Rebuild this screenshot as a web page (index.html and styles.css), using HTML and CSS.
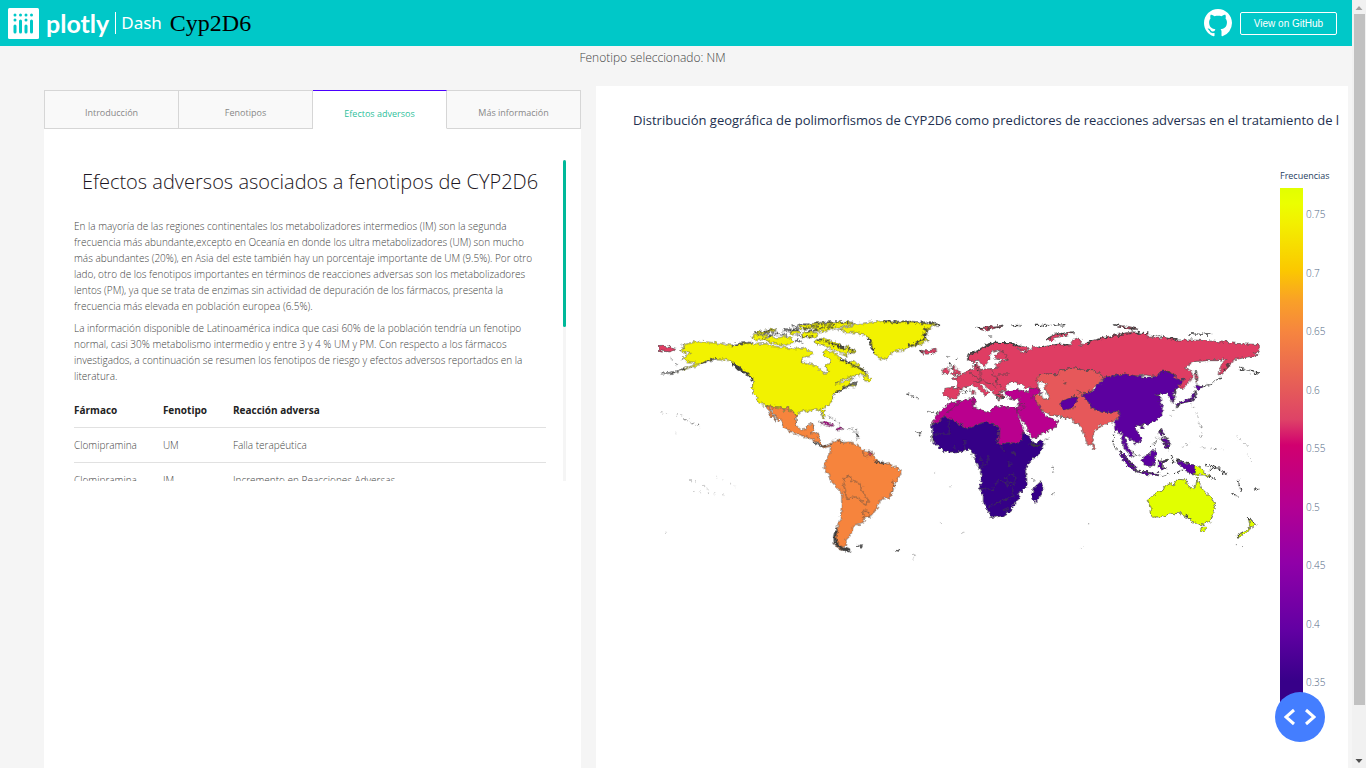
FILE: index.html
```html
<!DOCTYPE html>
<html lang="es">
<head>
<meta charset="utf-8">
<title>Cyp2D6</title>
<link rel="stylesheet" href="styles.css">
</head>
<body>
<div class="page">
  <header class="topbar">
    <a class="brand" href="#">
      <svg class="brand-mark" viewBox="0 0 31 31" aria-hidden="true">
        <rect width="31" height="31" rx="1.500" fill="#fff"/>
        <g stroke="#00c8c8" stroke-width="3" stroke-linecap="round">
          <path d="M7 18v6M12.500 13v11M18 18v6M23.500 13v11"/>
          <path d="M7 7h0M12.500 7h0M18 7h0M23.500 7h0M7 12h0M18 12h0" />
        </g>
      </svg>
      <span class="brand-name">plotly</span>
      <span class="brand-dash">Dash</span>
    </a>
    <h1 class="app-title">Cyp2D6</h1>
    <a class="gh-icon" href="#" aria-label="GitHub">
      <svg viewBox="0 0 16 16" width="28" height="28"><path fill="#fff" d="M8 0C3.580 0 0 3.580 0 8c0 3.540 2.290 6.530 5.470 7.590.4.070.55-.17.55-.38 0-.19-.01-.82-.01-1.490-2.010.37-2.530-.49-2.690-.94-.09-.23-.48-.94-.82-1.130-.28-.15-.68-.52-.01-.53.63-.01 1.080.58 1.230.82.72 1.210 1.870.87 2.330.66.07-.52.28-.87.51-1.070-1.780-.2-3.640-.89-3.640-3.950 0-.87.31-1.590.82-2.150-.08-.2-.36-1.020.08-2.120 0 0 .67-.21 2.200.82.64-.18 1.320-.27 2-.27s1.360.09 2 .27c1.530-1.040 2.200-.82 2.200-.82.44 1.100.16 1.920.08 2.120.51.56.82 1.270.82 2.150 0 3.070-1.870 3.750-3.650 3.950.29.25.54.73.54 1.480 0 1.070-.01 1.930-.01 2.200 0 .21.15.46.55.38A8.010 8.010 0 0 0 16 8c0-4.420-3.580-8-8-8z"/></svg>
    </a>
    <a class="gh-button" href="#">View on GitHub</a>
  </header>

  <p class="selected">Fenotipo seleccionado: NM</p>

  <main class="columns">
    <section class="info">
      <nav class="tabs" role="tablist">
        <button class="tab" role="tab">Introducción</button>
        <button class="tab" role="tab">Fenotipos</button>
        <button class="tab active" role="tab" aria-selected="true">Efectos adversos</button>
        <button class="tab" role="tab">Más información</button>
      </nav>
      <div class="scroller">
        <article class="article">
          <h2>Efectos adversos asociados a fenotipos de CYP2D6</h2>
          <p>En la mayoría de las regiones continentales los metabolizadores intermedios (IM) son la segunda frecuencia más abundante,excepto en Oceanía en donde los ultra metabolizadores (UM) son mucho más abundantes (20%), en Asia del este también hay un porcentaje importante de UM (9.5%). Por otro lado, otro de los fenotipos importantes en términos de reacciones adversas son los metabolizadores lentos (PM), ya que se trata de enzimas sin actividad de depuración de los fármacos, presenta la frecuencia más elevada en población europea (6.5%).</p>
          <p>La información disponible de Latinoamérica indica que casi 60% de la población tendría un fenotipo normal, casi 30% metabolismo intermedio y entre 3 y 4 % UM y PM. Con respecto a los fármacos investigados, a continuación se resumen los fenotipos de riesgo y efectos adversos reportados en la literatura.</p>
          <table>
            <thead><tr><th>Fármaco</th><th>Fenotipo</th><th>Reacción adversa</th></tr></thead>
            <tbody>
              <tr><td>Clomipramina</td><td>UM</td><td>Falla terapéutica</td></tr>
              <tr><td>Clomipramina</td><td>IM</td><td>Incremento en Reacciones Adversas</td></tr>
            </tbody>
          </table>
        </article>
        <div class="track"><div class="thumb"></div></div>
      </div>
    </section>

    <section class="chart">
      <h3>Distribución geográfica de polimorfismos de CYP2D6 como predictores de reacciones adversas en el tratamiento de l</h3>
      <div class="plot">
        <svg class="map" viewBox="24 24 1806 730" role="img" aria-label="Mapa mundial de frecuencias">
          <defs>
            <filter id="coast" x="-2%" y="-2%" width="104%" height="104%">
              <feTurbulence type="fractalNoise" baseFrequency="0.090" numOctaves="3" seed="4"/>
              <feDisplacementMap in="SourceGraphic" scale="16" xChannelSelector="R" yChannelSelector="G"/>
            </filter>
          </defs>
          <g filter="url(#coast)" class="land">
            <!-- Norteamérica y Groenlandia -->
            <g class="c-yellow">
              <path d="M118 100L140 94 180 97 220 102 245 106 275 100 300 97 310 103 350 101 365 108 390 112 440 115 462 113 478 122 490 131 480 140 460 140 453 155 475 160 500 168 515 180 522 190 535 186 530 175 527 165 538 160 540 150 535 142 525 140 518 128 530 122 545 125 560 134 575 148 595 158 612 152 625 165 640 178 650 186 645 195 630 192 610 198 585 206 555 222 585 214 612 203 600 215 603 226 618 222 625 215 612 230 595 225 580 232 570 240 555 248 550 262 545 275 535 283 520 295 523 310 526 322 518 320 512 300 495 298 480 302 465 302 450 305 442 315 438 320 425 303 410 292 400 299 390 292 365 290 348 288 325 275 312 250 306 235 310 212 300 200 285 190 270 175 255 160 240 153 220 148 190 146 170 152 160 160 130 170 100 180 60 190 100 177 125 168 140 158 110 155 105 148 92 148 105 140 125 128 100 125 88 122 105 112 95 106Z"/>
              <path d="M565 58L595 50 620 42 670 36 710 32 760 36 800 38 870 43 845 50 835 65 820 75 835 92 805 105 775 112 760 120 745 122 725 128 720 135 712 150 690 145 675 135 668 115 660 100 658 85 645 75 620 68 590 68Z"/>
              <path d="M640 208l8-14 14 12-4 8-14-2zM495 92l25-8 30 10 30 14 35 10-5 12-20-5 5 14-25-11-30-13-20-11-20 1z"/>
              <path d="M302 80l14-6 38 2-10 10-22 6zM338 88l22-9 20 6 22-6 24 6 8 12-30 9-28-4zM446 48l60-10 80-3 30 4-30 9-40 8-20 10-40-4 14-7-44 3z"/>
              <path d="M454 70l30-5 24 6-14 12-36-2zM420 66l20-6 10 8-20 6zM340 62l34-6 8 5-30 7zM315 68l20-5 20 7-30 3z"/>
            </g>
            <g class="dark-line">
              <path d="M248 158l22 22 18 8 20 22" stroke-width="7"/>
              <path d="M155 162l18-10 28-6" stroke-width="4"/>
              <path d="M312 66h30l20-6 14 4M338 72l46-4M355 80l30-8 26 4M400 58h34l12-6M398 64l50-4M425 50l38-8M440 76l30 6 22-6M455 44l60-4 30-4 60 2M460 56l40-8 60-4M470 66l40-10 40-6M438 90l20 8M500 86l30 8 40 20 40 4-10 14" stroke-width="4" stroke-dasharray="14 3 5 4 9 2"/>
              <path d="M820 56l14 4-14 14 12 10-18 6-16 12-24 4M760 35l70 4 40 5M700 34l60 3M655 84l10 20 8 28M570 148l30 10M545 102l40 10" stroke-width="6" stroke-dasharray="15 2 6 3"/>
              <path d="M32 191l30-3 40-10M245 106l30-6 30-2M595 160l35 14 22 16M625 215l-30 12-22 12-18 10" stroke-width="4"/>
              <path d="M100 327l20 6M124 340l18 2 8 12M62 146l8 6M75 162l8 6M535 316l25 18 10 10M595 357l25 2 5 30M770 252l34 10M838 305l30 5M800 365l14 4-8 10M352 296l28 34" stroke-width="3" stroke-dasharray="7 5 2 6"/>
            </g>
            <!-- México y Centroamérica -->
            <path class="c-orange" d="M348 288L390 292 400 300 410 293 425 303 438 320 440 348 455 360 470 358 472 345 492 342 490 358 484 366 500 370 508 385 515 402 528 408 542 400 542 408 522 414 508 402 495 392 480 385 450 375 420 365 400 350 392 335 375 320 362 294 358 296 378 332 372 330 358 310Z"/>
            <path class="c-magenta" d="M505 338l20-3 26 11-5 3-22-7zM560 352h14l8 5-20 2z"/>
            <!-- Sudamérica -->
            <g transform="translate(480 360)">
              <path class="c-orange" d="M62 42L75 32 90 28 100 38 120 36 138 42 150 52 165 62 185 65 195 85 205 95 225 98 245 105 268 118 273 130 265 145 252 160 248 185 240 202 215 208 205 222 200 235 185 258 165 265 160 280 135 285 128 295 125 308 118 320 108 330 110 345 100 350 115 362 100 362 85 355 72 340 75 320 80 300 84 285 92 260 95 220 95 185 80 172 65 155 52 130 42 115 45 100 52 85 60 70Z"/>
              <path class="border" d="M102 145l16-7 7 12 25 10 5 20 10 15 10 17-3 13-14-3-3-10-20-12-25 5-5-25-5-20zM160 240l22 12-7 10-17-2zM158 62l2 14 14 4"/>
              <path class="c-pink" d="M178 64l8 3-2 10-8-2z"/>
              <g class="dark-line">
                <path d="M80 297l-6 23 4 20 17 15 24 9" stroke-width="9"/>
                <path d="M192 95l14 2 10 2 14 2M10 35l25 14 12-2M140 349h18M256 360l12 3" stroke-width="5"/>
                <path d="M84 32l18 6M130 4l12 8-4 18M250 155l-4 30M308 372l8 8-6 8" stroke-width="3" stroke-dasharray="5 4"/>
              </g>
            </g>
            <!-- Europa y Rusia -->
            <g transform="translate(750 0)">
              <path class="c-pink" d="M132 235L172 232 172 215 155 205 185 196 205 182 220 178 218 165 232 160 240 178 270 176 290 175 288 162 300 155 325 150 290 148 282 138 298 128 300 118 280 124 266 136 270 146 262 158 252 170 244 162 236 150 220 155 205 150 202 138 235 122 260 106 285 97 330 98 385 114 380 125 350 116 368 130 395 118 400 108 412 115 430 108 450 105 480 102 510 105 518 90 530 85 545 90 542 110 555 100 575 92 620 80 660 72 700 65 745 72 740 80 780 85 800 80 830 90 875 90 920 92 980 97 1030 102 1079 103 1079 124 1060 128 1075 136 1040 142 1010 148 995 148 1000 155 985 170 965 192 958 195 962 170 970 155 980 145 955 152 920 152 880 155 855 175 870 182 880 195 870 215 850 235 835 235 840 225 852 208 835 210 825 198 800 185 780 185 775 200 740 195 710 198 685 200 675 192 635 198 615 202 580 182 555 182 525 174 490 180 480 178 475 195 440 192 415 195 415 210 410 225 418 238 425 250 400 235 380 235 370 228 345 215 325 222 315 235 318 242 300 245 310 262 300 270 290 262 280 245 265 235 245 222 240 224 255 240 268 250 255 257 245 245 232 232 218 225 205 228 190 232 180 245 170 265 150 268 148 262 132 258Z"/>
              <path class="c-pink" d="M160 165l8 10 17 17-25 5-5-7 10-5-12-12zM128 180l17-8v18l-17 2zM58 120l17 3 33-5 2 10-35 5zM232 54l50-6 28-2-20 8-30 6zM440 90l18-14 60-10 4 4-50 12-16 12zM-724 104l51 14-15 8-36-4zM888 180l7 25-5 17-5-22zM216 240l8 2-2 14-6-2zM640 44l50 6 25 8-30-1z"/>
              <path class="border" d="M172 234l22 8M205 182l12 14 18 8 10 8-24 6M240 180l2 26 14 6M270 178l14 20 8 20M292 192h38M292 200l-4 20 18 10M256 218l24 4 8 12M325 150l-8-20-20-8"/>
              <g class="dark-line">
                <path d="M204 148l2-14 26-10 28-18 26-8 44 2 34 8" stroke-width="6"/>
                <path d="M222 160l12 20M145 160l14 10-6 10M58 120l14 8M292 250l18 16M286 258l14 12" stroke-width="5" stroke-dasharray="9 3 4 2"/>
                <path d="M230 52l40 2 40-8M335 48l25-2M404 46h44l54-2M440 90l20-16 60-8M640 44l70 14M865 72h70M1018 174l20 8 45 8M415 112l40-8 60 0M560 98l70-18 80-12 80 12 40 10M902 232l30-10 30-22M990 160l-20 22" stroke-width="4" stroke-dasharray="18 4 7 3 11 6"/>
                <path d="M20 254l34 10M85 305l30 4M50 365l14 4-8 10M185 250l24-10M142 138h4M168 148h4M268 78h4" stroke-width="4" stroke-dasharray="5 6"/>
              </g>
              <!-- Asia central y meridional -->
              <path class="c-coral" d="M415 195L440 192 475 195 480 178 490 180 525 174 555 182 580 182 615 202 600 215 595 225 580 232 575 245 550 250 548 262 565 275 575 295 610 308 645 305 660 308 655 320 640 335 625 340 605 345 580 370 577 400 565 408 555 385 545 355 540 345 525 340 515 325 480 322 465 318 440 310 425 300 415 285 408 270 402 255 415 252 430 265 445 262 440 240 425 230 418 220 410 210ZM578 402l8 10-4 8-6-8z"/>
              <path class="sea" d="M414 224l14-9 12 7-8 8 8 18 6 16-12 4-8-12z"/>
              <path class="c-purple" d="M485 272l15-4 15-6 17-2-2 15-10 17-25 10-13-12z"/>
              <path class="border" d="M530 240l18 8M536 250l20-4M520 260l14 2M492 218h6v4h-6z"/>
              <!-- Oriente Medio -->
              <path class="c-magenta" d="M315 245L345 238 385 245 392 235 420 238 425 250 402 255 408 270 415 285 430 310 440 320 455 325 475 335 465 352 440 365 400 385 390 375 380 350 365 330 350 308 345 300 355 290 358 268 340 268 320 262Z"/>
              <path class="border" d="M355 288l18-8M345 302l18-2 10-14M402 256l-8 10"/>
            </g>
            <!-- África -->
            <g transform="translate(810 240)">
              <path class="c-magenta" d="M90 40L130 30 160 25 170 30 162 50 185 60 210 68 215 55 240 48 290 55 292 70 300 95 315 125 305 150 290 160 260 158 245 165 230 160 235 140 237 110 200 95 140 115 90 85 70 78 60 95 35 105 45 85 65 60Z"/>
              <path class="c-navy" d="M35 105L60 95 70 78 90 85 140 115 200 95 237 110 235 140 230 160 245 165 260 158 290 160 305 150 308 125 322 135 333 148 340 160 372 150 370 165 355 195 330 215 315 235 320 265 322 290 295 310 298 325 285 340 275 360 250 378 212 383 205 365 190 335 190 315 178 295 185 265 180 240 165 215 165 190 140 178 120 185 80 187 55 170 40 155 35 135ZM340 295l22-20 8 15-12 35-13 13-10-13z"/>
              <path class="border" d="M160 28l-4 22 8 8M70 76l32-24 24-20M88 88v44H36M104 165v14M134 150v28M182 200l8 20-8 12M208 195l-10 30-10 6M235 162l20 22M265 215l8 6-6 12zM260 258l18-8 10 14-6 18-20-4zM180 296l40 2 16-30 40 24 6 28M205 350l50-22 25-10M252 356l8-4 4 8-8 4zM272 190h18"/>
              <g class="dark-line">
                <path d="M38 138v16M330 160l14 8 18-4" stroke-width="5"/>
                <path d="M378 148l10-2M335 265l14 10M395 232h4v20M394 315l12-4M155 190l2 12M45 250h2M88 290h2" stroke-width="3" stroke-dasharray="4 4"/>
              </g>
            </g>
            <!-- Asia oriental -->
            <g transform="translate(1230 0)">
              <path class="c-purple" d="M135 202L155 198 195 192 230 198 260 202 295 198 300 185 320 183 345 198 355 210 372 208 360 225 350 240 338 250 345 270 338 278 330 262 320 250 300 250 288 258 305 262 298 272 308 290 305 315 285 335 262 342 240 345 225 350 235 370 245 385 235 400 225 402 215 390 205 380 195 385 200 405 215 425 220 442 206 432 192 412 185 385 185 365 175 372 165 355 162 340 175 320 180 308 165 305 130 308 95 295 85 275 68 262 70 250 95 245 115 225Z"/>
              <path class="c-purple" d="M410 225l18 7-16 8-7-8zM403 245l5 15-13 12-25 8-20 10-5-7 30-11 20-10zM242 348l10-4-2 12-8 2zM300 358l10 2-2 18-8-4zM308 380l20 14-2 22-14-14-8-14z"/>
              <path class="dark-line" stroke-width="4" stroke-dasharray="12 3 5 4" d="M405 245l2 14-24 16-34 14M348 240l-8 34M302 250l-12 10M316 378l12 20M300 185l22-2 22 14M408 180l2 34"/>
              <path class="dark-line" stroke-width="2" stroke-dasharray="3 9 5 14" d="M350 292l-20 30M395 280l20 40 10 50-8 20M165 360l-4 40 12 20M295 370l-20 40M420 410l30 8"/>
            </g>
            <!-- Sudeste asiático y Oceanía -->
            <g transform="translate(1290 330)">
              <path class="c-purple" d="M115 92l15 8 20 25 18 15-3 12-20-12-20-28zM185 118l15-12 15-8 10-10 6 12-6 20-5 18-15 1-15-7zM165 152l35 5 40 4-4 6-46-4zM235 125l25-5-5 7-13 3 16 15-10 5-13-10zM252 68l18 4-2 18-14-6zM290 122l30 8 25 5-2 30-18-5-10-15-14-6z"/>
              <path class="c-lime" d="M345 135l20 10 10 15 17 12-22-7-27 0zM203 240L225 222 250 210 255 198 272 190 280 195 292 178 320 180 322 195 340 208 348 195 350 172 360 190 365 205 380 220 398 235 407 258 400 285 390 305 365 315 345 308 330 300 325 288 318 292 300 280 270 282 245 290 215 292 213 265ZM362 322h18l-4 15-10 0zM505 293l10 12 15 5-8 12-12-4zM512 322l-12 18-25 15-3-10 23-13z"/>
              <g class="dark-line">
                <path d="M240 26l8 20M244 56l24 34M118 94l30 34 18 20M246 168l24-6M288 158l18-8M234 122l28-4-18 14 14 16M274 108l8 20M292 120l40 10M376 136l24 4-12 14M402 138l44 28M388 170l20 8M472 178l12 38M458 220l18 12M526 206l14 6M502 292l18 14M316 286l14 12M472 350l20-14" stroke-width="4" stroke-dasharray="13 3 6 4"/>
                <path d="M212 82l28-30M160 100l20 8M104 42l-4 30 12 20M166 152l74 12" stroke-width="3" stroke-dasharray="9 4 4 3"/>
                <path d="M360 10l8 26-4 20M472 50l30 30M500 100l20 30M308 82l26-16M395 84l40 6M4 384h4M468 374h3M486 380h3M26 310v4" stroke-width="2" stroke-dasharray="3 7 5 12"/>
              </g>
            </g>
            <path class="dark-line" stroke-width="2" stroke-dasharray="3 14 2 25" d="M34 308l66 10M78 366v2M120 510l30 10 40 30M130 545l90 10M200 500l60 30M46 668h4M650 605h3M870 640h3M940 668h3"/>
          </g>
        </svg>
        <aside class="legend">
          <h4>Frecuencias</h4>
          <div class="scale">
            <div class="ramp"></div>
            <ol class="ticks">
              <li>0.75</li><li>0.7</li><li>0.65</li><li>0.6</li><li>0.55</li><li>0.5</li><li>0.45</li><li>0.4</li><li>0.35</li>
            </ol>
          </div>
        </aside>
      </div>
    </section>
  </main>
</div>

<div class="page-scroll" aria-hidden="true">
  <svg width="14" height="14"><path d="M3.500 10h7L7 6z" fill="#a3a3a3"/></svg>
  <div class="page-thumb"></div>
  <svg class="down" width="14" height="14"><path d="M3.500 5h7L7 9z" fill="#505050"/></svg>
</div>

<button class="devtools" aria-label="Herramientas">
  <svg width="32" height="18" viewBox="0 0 32 18" fill="none" stroke="#fff" stroke-width="3"><path d="M10 2L2 9l8 7M22 2l8 7-8 7"/></svg>
</button>
</body>
</html>
```
FILE: styles.css
```css
* { box-sizing: border-box; }

body {
  margin: 0;
  height: 100vh;
  display: flex;
  overflow: hidden;
  background: #f5f5f5;
  font-family: "Open Sans", "Noto Sans", sans-serif;
  font-weight: 300;
  color: #444;
}

h1, h2, h3, h4, p, ol { margin: 0; padding: 0; font-weight: inherit; }
a { color: inherit; text-decoration: none; }

.page {
  flex: 1;
  min-width: 0;
  display: flex;
  flex-direction: column;
}

/* Header */
.topbar {
  flex: none;
  height: 46px;
  padding: 0 15px 0 8px;
  display: flex;
  align-items: center;
  gap: 8px;
  background: #00c8c8;
}
.brand { display: flex; align-items: center; color: #fff; }
.brand-mark { width: 31px; height: 31px; margin-right: 7px; }
.brand-name {
  font: 700 25px/28px Lato, sans-serif;
  padding-right: 6px;
}
.brand-dash {
  border-left: 1px solid #fff;
  padding-left: 5px;
  font: 400 17px/22px "Noto Sans", sans-serif;
}
.app-title {
  flex: 1;
  font: 400 24px/28px "Liberation Serif", serif;
  color: #000;
}
.gh-icon { display: flex; }
.gh-button {
  width: 97px;
  border: 1px solid #fff;
  border-radius: 2px;
  color: #fff;
  text-align: center;
  font: 400 10px/21px "Liberation Sans", sans-serif;
}

.selected {
  flex: none;
  padding-right: 47px;
  height: 40px;
  text-align: center;
  font-size: 12px;
  line-height: 24px;
}

/* Two columns */
.columns {
  flex: 1;
  min-height: 0;
  display: grid;
  grid-template-columns: 5fr 7fr;
  gap: 15px;
  padding: 0 4px 0 44px;
}
.info {
  margin-top: 4px;
  background: #fff;
  min-width: 0;
}
.tabs {
  display: grid;
  grid-template-columns: repeat(4, 1fr);
  border-left: 1px solid #d6d6d6;
}
.tab {
  height: 39px;
  padding: 6px 0 0;
  border: 1px solid #d6d6d6;
  border-left: 0;
  background: #f9f9f9;
  font: 400 9px/16px "Open Sans", sans-serif;
  color: #888;
}
.tab.active {
  padding-top: 8px;
  background: #fff;
  border-top-color: #4b00ff;
  border-bottom-color: #fff;
  color: #2fbf9c;
}

.scroller {
  display: flex;
  height: 321px;
  margin: 31px 15px 0 30px;
  overflow: hidden;
}
.article { flex: 1; padding-right: 17px; overflow: hidden; }
.article h2 {
  margin: 6px 0 20px;
  text-align: center;
  font-size: 20px;
  font-weight: 300;
  line-height: 32px;
  white-space: nowrap;
  color: #1c1622;
}
.article p {
  margin-bottom: 6px;
  padding-right: 10px;
  font-size: 10px;
  line-height: 16px;
}
.article table {
  width: 100%;
  margin-top: 9px;
  border-collapse: collapse;
  font-size: 10px;
  line-height: 16px;
}
.article th, .article td {
  padding: 9px 26px 9px 0;
  border-bottom: 1px solid #e1e1e1;
  text-align: left;
}
.article th { font-weight: 700; color: #222; }
.article th:last-child { width: 100%; }
.article td { white-space: nowrap; }
.track { width: 3px; background: #f5f5f5; }
.thumb { height: 167px; border-radius: 2px; background: #00b899; }

/* Chart */
.chart {
  min-width: 0;
  overflow: hidden;
  background: #fff;
  color: #2a3f5f;
}
.chart h3 {
  padding: 24px 0 0 37px;
  font-size: 13px;
  font-weight: 400;
  line-height: 20px;
  white-space: nowrap;
  color: #22304f;
}
.plot {
  display: flex;
  align-items: flex-start;
  gap: 20px;
  padding: 39px 0 0 62px;
}
.map { flex: 1; min-width: 0; margin-top: 149px; }
.land { stroke: #444; stroke-width: 2; stroke-linejoin: round; }
.c-yellow { fill: #f2f200; }
.c-lime { fill: #e1ff00; }
.c-orange { fill: #f6843d; }
.c-coral { fill: #e6595a; }
.c-pink { fill: #df3d64; }
.c-magenta { fill: #ba008e; }
.c-purple { fill: #5b009f; }
.c-navy { fill: #340087; }
.sea { fill: #fff; }
.border { fill: none; }
.dark-line { fill: none; stroke: #3c3c3c; }

.legend { width: 68px; }
.legend h4 { font-size: 9px; line-height: 14px; font-weight: 400; }
.scale { display: flex; gap: 3px; margin-top: 5px; }
.ramp {
  width: 23px;
  height: 514px;
  background: linear-gradient(#e1ff00 0, #ebff00 3%, #f3ef00 7%, #fbc800 16%, #f9a028 22%, #f6853f 28%, #e55b59 39%, #de4367 45%, #d1006f 50%, #b30093 62%, #9000a8 73%, #6200a3 86%, #370089 96%);
}
.ticks {
  height: 482px;
  margin-top: 19px;
  display: flex;
  flex-direction: column;
  justify-content: space-between;
  list-style: none;
  font-size: 10px;
  line-height: 14px;
  color: #506784;
}

/* Window scroll bar */
.page-scroll {
  flex: none;
  width: 14px;
  display: flex;
  flex-direction: column;
  align-items: center;
  background: #f1f1f1;
}
.page-thumb { width: 11px; height: 90%; background: #c1c1c1; }
.down { margin-top: auto; }

.devtools {
  position: fixed;
  right: 41px;
  bottom: 26px;
  width: 50px;
  height: 50px;
  padding: 0;
  display: grid;
  place-items: center;
  border: 0;
  border-radius: 50%;
  background: #447eff;
}
```
